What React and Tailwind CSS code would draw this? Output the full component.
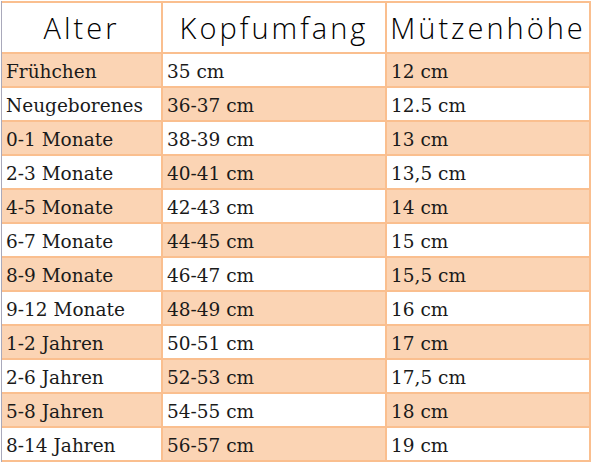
import React from "react";

const rows = [
  ["Frühchen", "35 cm", "12 cm"],
  ["Neugeborenes", "36-37 cm", "12.5 cm"],
  ["0-1 Monate", "38-39 cm", "13 cm"],
  ["2-3 Monate", "40-41 cm", "13,5 cm"],
  ["4-5 Monate", "42-43 cm", "14 cm"],
  ["6-7 Monate", "44-45 cm", "15 cm"],
  ["8-9 Monate", "46-47 cm", "15,5 cm"],
  ["9-12 Monate", "48-49 cm", "16 cm"],
  ["1-2 Jahren", "50-51 cm", "17 cm"],
  ["2-6 Jahren", "52-53 cm", "17,5 cm"],
  ["5-8 Jahren", "54-55 cm", "18 cm"],
  ["8-14 Jahren", "56-57 cm", "19 cm"],
];

const headers = ["Alter", "Kopfumfang", "Mützenhöhe"];

export default function App() {
  return (
    <div className="w-[593px] h-[464px] bg-white pt-px pl-px">
      <div className="w-[590px] border-l border-l-[#a9a9bb]">
        <div className="grid grid-cols-[159px_222px_202px] gap-[2px] bg-[#fabf8f] pt-[2px] pr-[2px] pb-[2px]">
          {headers.map((h) => (
            <div
              key={h}
              className="h-[49px] bg-white flex items-center justify-center text-[29px] font-light tracking-[3px] text-black"
              style={{ fontFamily: '"Open Sans", "DejaVu Sans", sans-serif' }}
            >
              {h}
            </div>
          ))}
          {rows.map((r, i) =>
            r.map((c, j) => (
              <div
                key={i + "-" + j}
                className={`h-[32px] flex items-center pl-1 pt-1 text-[18.5px] text-[#1a1a1a] leading-none ${
                  (i + j) % 2 === 0 ? "bg-[#fbd4b4]" : "bg-white"
                }`}
                style={{ fontFamily: '"DejaVu Serif", "Liberation Serif", serif' }}
              >
                {c}
              </div>
            ))
          )}
        </div>
      </div>
    </div>
  );
}
